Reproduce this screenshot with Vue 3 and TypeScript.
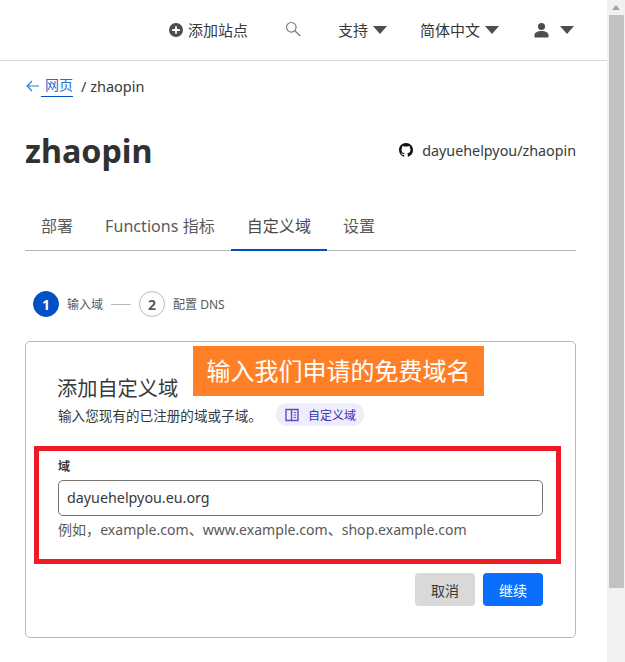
<script setup lang="ts">
const tabs = ['部署', 'Functions 指标', '自定义域', '设置']
const activeTab = '自定义域'
</script>

<template>
  <div class="window">
    <div class="page">
      <header class="topbar">
        <a class="nav add">
          <svg class="plus" viewBox="0 0 14 14" width="14" height="14">
            <circle cx="7" cy="7" r="7" fill="#4d4d4d" />
            <path d="M7 3.2v7.6M3.2 7h7.6" stroke="#fff" stroke-width="1.8" />
          </svg>
          添加站点
        </a>
        <svg class="search" viewBox="0 0 16 16" width="16" height="16" fill="none" stroke="#7a7a7a">
          <circle cx="6.3" cy="6.3" r="4.8" stroke-width="1.2" />
          <path d="M9.8 9.8l5.4 5.2" stroke-width="1.4" />
        </svg>
        <a class="nav support">支持<i class="caret"></i></a>
        <a class="nav lang">简体中文<i class="caret"></i></a>
        <a class="nav user">
          <svg viewBox="0 0 16 16" width="15" height="16" fill="#4d4d4d">
            <circle cx="8" cy="4.2" r="3.8" />
            <path d="M0.5 16v-2.4C0.5 10.8 3.5 9 8 9s7.5 1.8 7.5 4.6V16z" />
          </svg>
          <i class="caret user-caret"></i>
        </a>
      </header>

      <main class="content">
        <nav class="crumbs">
          <svg class="back" viewBox="0 0 14 12" width="14" height="12" fill="none" stroke="#2f7bdc" stroke-width="1.2">
            <path d="M13 6H1.2M6 1L1.2 6 6 11" />
          </svg>
          <a class="crumb-link">网页</a>
          <span class="crumb-rest">/ zhaopin</span>
        </nav>

        <div class="title-row">
          <h1>zhaopin</h1>
          <a class="repo">
            <svg viewBox="0 0 16 16" width="14" height="14" fill="#111">
              <path d="M8 0C3.58 0 0 3.58 0 8c0 3.54 2.29 6.53 5.47 7.59.4.07.55-.17.55-.38 0-.19-.01-.82-.01-1.49-2.01.37-2.53-.49-2.69-.94-.09-.23-.48-.94-.82-1.13-.28-.15-.68-.52-.01-.53.63-.01 1.08.58 1.23.82.72 1.21 1.87.87 2.33.66.07-.52.28-.87.51-1.07-1.78-.2-3.64-.89-3.64-3.95 0-.87.31-1.59.82-2.15-.08-.2-.36-1.02.08-2.12 0 0 .67-.21 2.2.82.64-.18 1.32-.27 2-.27s1.36.09 2 .27c1.53-1.04 2.2-.82 2.2-.82.44 1.1.16 1.92.08 2.12.51.56.82 1.27.82 2.15 0 3.07-1.87 3.75-3.65 3.95.29.25.54.73.54 1.48 0 1.07-.01 1.93-.01 2.2 0 .21.15.46.55.38A8.01 8.01 0 0 0 16 8c0-4.42-3.58-8-8-8z" />
            </svg>
            <span>dayuehelpyou/zhaopin</span>
          </a>
        </div>

        <div class="tabs">
          <a v-for="tab in tabs" :key="tab" class="tab" :class="{ active: tab === activeTab }">{{ tab }}</a>
        </div>

        <div class="steps">
          <span class="dot current">1</span>
          <span class="step-text">输入域</span>
          <span class="step-line"></span>
          <span class="dot">2</span>
          <span class="step-text">配置 DNS</span>
        </div>

        <section class="card">
          <div class="callout">输入我们申请的免费域名</div>
          <h2>添加自定义域</h2>
          <div class="intro">
            <span>输入您现有的已注册的域或子域。</span>
            <a class="doc-pill">
              <svg viewBox="0 0 14 14" width="14" height="14" fill="none" stroke="#5a4fc0" stroke-width="1.4">
                <path d="M1 1.5h5.5v11H1zM6.5 1.5H13v11H6.5" />
                <path d="M8.6 4.6h2.6M8.6 7h2.6M8.6 9.4h2.6" stroke-width="1" />
              </svg>
              自定义域
            </a>
          </div>

          <div class="field">
            <div class="mark"></div>
            <label>域</label>
            <div class="input">dayuehelpyou.eu.org</div>
            <p class="hint">例如，example.com、www.example.com、shop.example.com</p>
          </div>

          <div class="actions">
            <button class="btn cancel">取消</button>
            <button class="btn go">继续</button>
          </div>
        </section>
      </main>
    </div>

    <aside class="scrollbar">
      <i class="up"></i>
      <div class="thumb"></div>
    </aside>
  </div>
</template>

<style>
html, body {
  margin: 0;
  overflow: hidden;
  background: #fff;
}
</style>

<style scoped>
.window {
  display: flex;
  width: 625px;
  height: 662px;
  overflow: hidden;
  font-family: "Noto Sans", "Noto Sans CJK SC", sans-serif;
  color: #36393a;
}

.page {
  width: 607px;
  flex: none;
}

.topbar {
  height: 61px;
  box-sizing: border-box;
  border-bottom: 1px solid #d9d9d9;
  display: flex;
  align-items: center;
  justify-content: flex-end;
  padding: 0 33px 1px 0;
  font-size: 15px;
}

.nav {
  display: flex;
  align-items: center;
}

.plus {
  margin-right: 5px;
}

.search {
  margin: 0 37px;
  position: relative;
  top: -1px;
}

.caret {
  width: 0;
  height: 0;
  margin-left: 5px;
  border-left: 7px solid transparent;
  border-right: 7px solid transparent;
  border-top: 8px solid #4d4d4d;
}

.lang {
  margin-left: 33px;
}

.user {
  margin-left: 35px;
}

.user-caret {
  margin-left: 11px;
}

.content {
  padding: 0 31px 0 25px;
}

.crumbs {
  height: 50px;
  display: flex;
  align-items: center;
  font-size: 14px;
}

.back {
  margin-left: 1px;
}

.crumb-link {
  margin-left: 1px;
  padding: 0 0 2px 4px;
  color: #2b6fd0;
  border-bottom: 1px solid #0051c3;
  line-height: 18px;
}

.crumb-rest {
  margin-left: 8px;
  font-size: 14.5px;
}

.title-row {
  height: 78px;
  display: flex;
  align-items: center;
  justify-content: space-between;
}

h1 {
  margin: 0;
  font-size: 32.3px;
  font-weight: 700;
  color: #313131;
}

.repo {
  display: flex;
  align-items: center;
  gap: 9px;
  font-size: 14.3px;
}

.tabs {
  display: flex;
  margin-top: 24px;
  height: 37px;
  border-bottom: 1px solid #b5b5b5;
}

.tab {
  padding: 0 16px;
  height: 37px;
  font-size: 16px;
  letter-spacing: 0.05px;
  line-height: 26px;
  color: #595959;
}

.tab.active {
  color: #4a4a4a;
  height: 36px;
  border-bottom: 2px solid #0051c3;
}

.steps {
  display: flex;
  align-items: center;
  margin-top: 40px;
  padding-left: 8px;
  font-size: 12px;
  color: #595959;
}

.dot {
  width: 26px;
  height: 26px;
  box-sizing: border-box;
  border: 1px solid #b9b9b9;
  border-radius: 50%;
  display: flex;
  align-items: center;
  justify-content: center;
  font-size: 14px;
  font-weight: 700;
}

.dot.current {
  background: #0051c3;
  border-color: #0051c3;
  color: #fff;
}

.step-text {
  margin-left: 8px;
}

.step-line {
  width: 20px;
  height: 1px;
  margin: 0 8px;
  background: #b9b9b9;
}

.card {
  position: relative;
  margin-top: 24px;
  height: 297px;
  box-sizing: border-box;
  border: 1px solid #b9b9b9;
  border-radius: 5px;
  padding: 32px 32px 0;
}

.callout {
  position: absolute;
  left: 167px;
  top: 4px;
  width: 291px;
  height: 50px;
  background: #ff7f27;
  color: #fff;
  font-size: 24px;
  line-height: 50px;
  text-align: center;
}

h2 {
  margin: 0 0 0 -1px;
  font-size: 20.2px;
  font-weight: 400;
  line-height: 28px;
}

.intro {
  display: flex;
  align-items: center;
  margin-top: 1px;
  font-size: 13.6px;
}

.doc-pill {
  display: flex;
  align-items: center;
  gap: 9px;
  height: 23px;
  margin-left: 14px;
  padding: 0 8px 0 9px;
  border-radius: 12px;
  background: #efecfb;
  color: #3a2fb5;
  font-size: 12px;
}

.field {
  position: relative;
  margin-top: 32px;
}

.mark {
  position: absolute;
  left: -24px;
  right: -18px;
  top: -12px;
  height: 118px;
  box-sizing: border-box;
  border: 5px solid #ed1c24;
  pointer-events: none;
}

label {
  display: block;
  padding-top: 1px;
  font-size: 12px;
  font-weight: 700;
  line-height: 16px;
}

.input {
  margin-top: 5px;
  height: 36px;
  box-sizing: border-box;
  border: 1px solid #777;
  border-radius: 5px;
  padding-left: 8px;
  font-size: 14.3px;
  line-height: 33px;
}

.hint {
  margin: 4px 0 0;
  font-size: 14.07px;
  line-height: 20px;
  color: #595959;
}

.actions {
  display: flex;
  justify-content: flex-end;
  gap: 8px;
  margin-top: 33px;
}

.btn {
  width: 60px;
  height: 33px;
  padding: 0;
  border: 0;
  border-radius: 4px;
  font-family: inherit;
  font-size: 14px;
}

.cancel {
  background: #d9d9d9;
  color: #36393a;
}

.go {
  background: #0a6ffd;
  color: #fff;
}

.scrollbar {
  position: relative;
  flex: 1;
  background: #f1f1f1;
}

.up {
  display: block;
  width: 0;
  height: 0;
  margin: 5px auto 0;
  border-left: 4px solid transparent;
  border-right: 4px solid transparent;
  border-bottom: 5px solid #a3a3a3;
}

.thumb {
  margin: 5px 1px 0 2px;
  height: 573px;
  background: #c1c1c1;
}
</style>
